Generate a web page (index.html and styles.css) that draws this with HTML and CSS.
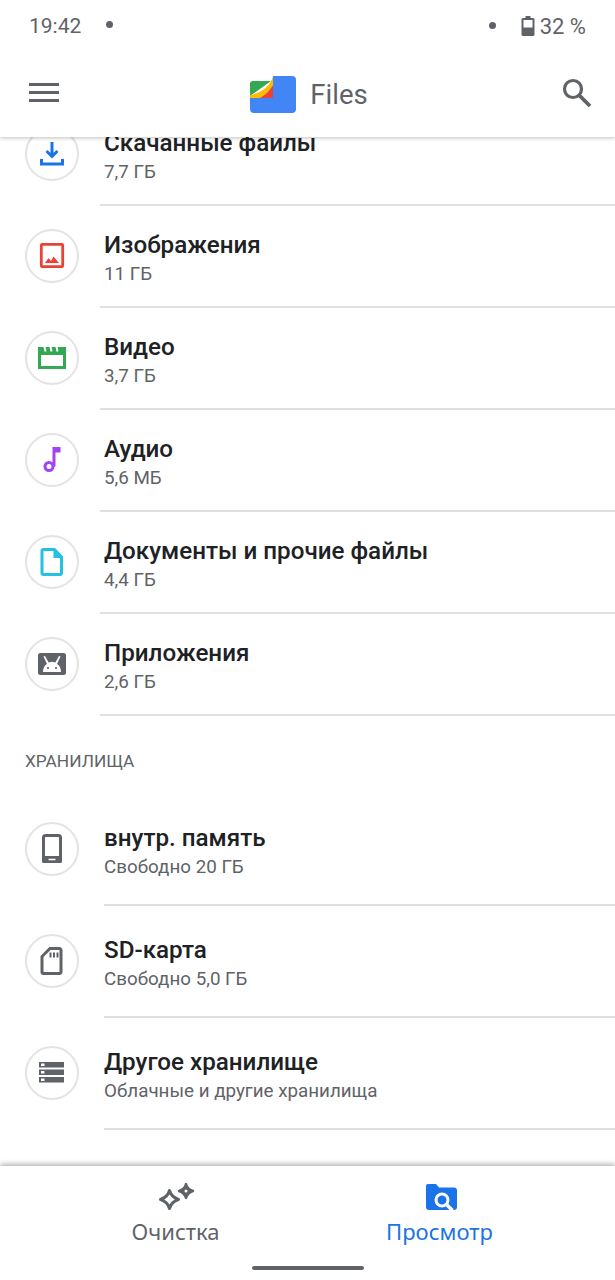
FILE: index.html
```html
<!DOCTYPE html>
<html lang="ru">
<head>
    <meta name="viewport" content="width=device-width, initial-scale=1" charset="utf-8">
    <title>Files</title>
    <link rel="stylesheet" href="styles.css">
</head>
<body>
<header class="top">
    <div class="status">
        <span class="status-time">19:42</span>
        <span class="dot dot-left"></span>
        <span class="status-space"></span>
        <span class="dot dot-right"></span>
        <svg class="battery" width="14" height="20" viewBox="0 0 14 20">
            <path d="M4.500 0h5v2h2.500a1.500 1.500 0 0 1 1.500 1.500v15a1.500 1.500 0 0 1-1.500 1.500h-10a1.500 1.500 0 0 1-1.500-1.500v-15a1.500 1.500 0 0 1 1.500-1.500h2.500z" fill="#5f6368"/>
            <rect x="2.500" y="4" width="9" height="7.500" fill="#fff"/>
        </svg>
        <span class="status-pct">32 %</span>
    </div>
    <div class="appbar">
        <svg class="menu-icon" width="30" height="20" viewBox="0 0 30 20">
            <path d="M0 1.500h30M0 9.500h30M0 17.500h30" stroke="#5f6368" stroke-width="3" fill="none"/>
        </svg>
        <div class="brand">
            <svg width="46" height="37" viewBox="0 0 46 37">
                <path d="M3 5h18L0 20V8a3 3 0 0 1 3-3z" fill="#34a853"/>
                <path d="M23 0C21 9 12 17 0 19v4h8C16 19 21 14 23 9z" fill="#fbbc04"/>
                <path d="M8 23C16 19 20 14 23 9v14z" fill="#ea4335"/>
                <path d="M23 0h19a4 4 0 0 1 4 4v29a4 4 0 0 1-4 4H4a4 4 0 0 1-4-4V22h23z" fill="#4285f4"/>
            </svg>
            <span class="brand-name">Files</span>
        </div>
        <svg class="search-icon" width="30" height="30" viewBox="0 0 30 30">
            <circle cx="11" cy="11" r="8.500" stroke="#5f6368" stroke-width="3.200" fill="none"/>
            <path d="M17.500 17.500L28 28" stroke="#5f6368" stroke-width="3.800" fill="none"/>
        </svg>
    </div>
</header>

<main class="content">
    <div class="list">
        <div class="row">
            <div class="row-icon"><div class="circle">
                <svg width="32" height="32" viewBox="0 0 32 32">
                    <path d="M16 4v14M10.500 13l5.500 5.500 5.500-5.500" stroke="#1a73e8" stroke-width="3" fill="none"/>
                    <path d="M5.500 21v5h21v-5" stroke="#1a73e8" stroke-width="3" fill="none"/>
                </svg>
            </div></div>
            <div class="row-text">
                <div class="title">Скачанные файлы</div>
                <div class="sub">7,7 ГБ</div>
            </div>
        </div>
        <div class="row">
            <div class="row-icon"><div class="circle">
                <svg width="32" height="32" viewBox="0 0 32 32">
                    <rect x="5.300" y="4.300" width="21.400" height="22.400" rx="1" stroke="#ea4335" stroke-width="2.800" fill="none"/>
                    <path d="M9 23l3.500-5 2.500 3 2.500-4.500 5.500 6.500z" fill="#ea4335"/>
                </svg>
            </div></div>
            <div class="row-text">
                <div class="title">Изображения</div>
                <div class="sub">11 ГБ</div>
            </div>
        </div>
        <div class="row">
            <div class="row-icon"><div class="circle">
                <svg width="32" height="32" viewBox="0 0 32 32">
                    <path d="M2 5h28v8H2z" fill="#34a853"/>
                    <path d="M8.500 4.500l1 5M14.500 4.500l1 5M20.500 4.500l1 5" stroke="#fff" stroke-width="2" fill="none"/>
                    <path d="M3.500 12v13.500h25V12" stroke="#34a853" stroke-width="3" fill="none"/>
                </svg>
            </div></div>
            <div class="row-text">
                <div class="title">Видео</div>
                <div class="sub">3,7 ГБ</div>
            </div>
        </div>
        <div class="row">
            <div class="row-icon"><div class="circle">
                <svg width="32" height="32" viewBox="0 0 32 32">
                    <circle cx="13" cy="22.500" r="4" stroke="#a142f4" stroke-width="3" fill="none"/>
                    <path d="M16.500 22.500V3h8v5.500h-5v14z" fill="#a142f4"/>
                </svg>
            </div></div>
            <div class="row-text">
                <div class="title">Аудио</div>
                <div class="sub">5,6 МБ</div>
            </div>
        </div>
        <div class="row">
            <div class="row-icon"><div class="circle">
                <svg width="32" height="32" viewBox="0 0 32 32">
                    <path d="M7.500 3.500h11l7 7.500v16a1.500 1.500 0 0 1-1.500 1.500H7.500A1.500 1.500 0 0 1 6 27V5a1.500 1.500 0 0 1 1.500-1.500z" stroke="#24c1e0" stroke-width="3" stroke-linejoin="round" fill="none"/>
                    <path d="M17.500 2l10 10h-10z" fill="#24c1e0"/>
                </svg>
            </div></div>
            <div class="row-text">
                <div class="title">Документы и прочие файлы</div>
                <div class="sub">4,4 ГБ</div>
            </div>
        </div>
        <div class="row">
            <div class="row-icon"><div class="circle">
                <svg width="32" height="32" viewBox="0 0 32 32">
                    <rect x="2" y="5" width="28" height="22" rx="2.500" fill="#5f6368"/>
                    <path d="M7 24c0-4 1.500-6.500 4-8L7.500 8.500 9 8l3.700 6.500a9 9 0 0 1 6.600 0L23 8l1.500.5L21 16c2.500 1.500 4 4 4 8z" fill="#fff"/>
                    <circle cx="12" cy="20" r="1.100" fill="#5f6368"/>
                    <circle cx="20" cy="20" r="1.100" fill="#5f6368"/>
                </svg>
            </div></div>
            <div class="row-text">
                <div class="title">Приложения</div>
                <div class="sub">2,6 ГБ</div>
            </div>
        </div>
    </div>

    <div class="section-label">ХРАНИЛИЩА</div>

    <div class="list list-storage">
        <div class="row">
            <div class="row-icon"><div class="circle">
                <svg width="32" height="32" viewBox="0 0 32 32">
                    <rect x="7.500" y="2.500" width="17" height="26" rx="2" stroke="#5f6368" stroke-width="3" fill="none"/>
                    <rect x="6" y="23" width="20" height="7" rx="1.500" fill="#5f6368"/>
                    <path d="M12.500 26.500h7" stroke="#fff" stroke-width="1.500"/>
                </svg>
            </div></div>
            <div class="row-text">
                <div class="title">внутр. память</div>
                <div class="sub">Свободно 20 ГБ</div>
            </div>
        </div>
        <div class="row">
            <div class="row-icon"><div class="circle">
                <svg width="32" height="32" viewBox="0 0 32 32">
                    <path d="M14 3.500h9.500a1.500 1.500 0 0 1 1.500 1.500v22a1.500 1.500 0 0 1-1.500 1.500h-16a1.500 1.500 0 0 1-1.500-1.500V11.500z" stroke="#5f6368" stroke-width="3" fill="none"/>
                    <path d="M14.500 7.500v5M18 7.500v5M21.500 7.500v5" stroke="#5f6368" stroke-width="2" fill="none"/>
                </svg>
            </div></div>
            <div class="row-text">
                <div class="title">SD-карта</div>
                <div class="sub">Свободно 5,0 ГБ</div>
            </div>
        </div>
        <div class="row">
            <div class="row-icon"><div class="circle">
                <svg width="32" height="32" viewBox="0 0 32 32">
                    <path d="M3 5h25v5.500H3zM3 12.500h25V18H3zM3 20h25v5.500H3z" fill="#5f6368"/>
                    <path d="M5 6.500h3.500v2.500H5zM5 14h3.500v2.500H5zM5 21.500h3.500V24H5z" fill="#fff"/>
                </svg>
            </div></div>
            <div class="row-text">
                <div class="title">Другое хранилище</div>
                <div class="sub">Облачные и другие хранилища</div>
            </div>
        </div>
    </div>
</main>

<nav class="bottom">
    <div class="tabs">
        <div class="tab">
            <svg width="40" height="32" viewBox="0 0 40 32">
                <path d="M13.500 8.500c1.200 4.500 3.800 7.200 9 9-5.200 1.800-7.800 4.500-9 9-1.200-4.500-3.800-7.200-9-9 5.200-1.800 7.800-4.500 9-9z" stroke="#5f6368" stroke-width="3" stroke-linejoin="round" fill="none"/>
                <path d="M30 2c.8 3.500 2.800 5.500 7 7-4.200 1.500-6.200 3.500-7 7-.8-3.500-2.800-5.500-7-7 4.200-1.500 6.200-3.500 7-7z" stroke="#5f6368" stroke-width="2.400" stroke-linejoin="round" fill="#5f6368"/>
                <circle cx="30" cy="9" r="1.500" fill="#fff"/>
            </svg>
            <span class="tab-label">Очистка</span>
        </div>
        <div class="tab tab-active">
            <svg width="40" height="32" viewBox="0 0 40 32">
                <path d="M8 2h8l3 3.500h15a3 3 0 0 1 3 3V25a3 3 0 0 1-3 3H9a3 3 0 0 1-3-3V4a2 2 0 0 1 2-2z" fill="#1a73e8"/>
                <circle cx="22" cy="18" r="6" stroke="#fff" stroke-width="3" fill="none"/>
                <path d="M26.500 22.500l6 6" stroke="#fff" stroke-width="3.500"/>
            </svg>
            <span class="tab-label">Просмотр</span>
        </div>
    </div>
    <div class="home-bar"></div>
</nav>
</body>
</html>
```

FILE: styles.css
```css
html, body {
    margin: 0;
    padding: 0;
}

body {
    width: 615px;
    height: 1280px;
    display: flex;
    flex-direction: column;
    overflow: hidden;
    background-color: white;
    font-family: Roboto, "Noto Sans", sans-serif;
}

.top {
    height: 137px;
    flex-shrink: 0;
    background-color: white;
    box-shadow: 0 1px 4px rgba(0, 0, 0, 0.25);
    z-index: 2;
}

.status {
    height: 52px;
    padding: 0 29px;
    display: flex;
    align-items: center;
    color: #5f6368;
    font-size: 21px;
}

.status-space {
    flex: 1;
}

.status-pct {
    margin-left: 5px;
    font-size: 22px;
}

.dot {
    width: 7px;
    height: 7px;
    border-radius: 50%;
    background-color: #5f6368;
}

.dot-left {
    margin-left: 25px;
    margin-bottom: 4px;
}

.dot-right {
    margin-right: 25px;
    margin-bottom: 2px;
}

.appbar {
    height: 85px;
    padding: 0 23px 0 29px;
    display: flex;
    align-items: center;
    justify-content: space-between;
}

.menu-icon {
    margin-bottom: 3px;
}

.search-icon {
    margin-bottom: 3px;
}

.brand {
    display: flex;
    align-items: center;
    gap: 14px;
    margin-left: -3px;
}

.brand-name {
    color: #5f6368;
    font-size: 27.500px;
}

.content {
    flex: 1;
    overflow: hidden;
}

.list {
    margin-top: -33px;
}

.row {
    height: 102px;
    display: flex;
}

.row-icon {
    width: 100px;
    padding: 0 0 2px 25px;
    box-sizing: border-box;
    display: flex;
    align-items: center;
    flex-shrink: 0;
}

.circle {
    width: 54px;
    height: 54px;
    box-sizing: border-box;
    border: 2px solid #e3e3e3;
    border-radius: 50%;
    display: flex;
    align-items: center;
    justify-content: center;
}

.circle svg {
    flex-shrink: 0;
}

.row-text {
    flex: 1;
    padding: 6px 0 0 4px;
    box-sizing: border-box;
    border-bottom: 2px solid #e0e0e0;
    display: flex;
    flex-direction: column;
    justify-content: center;
}

.title {
    color: #202124;
    font-size: 24.200px;
    font-weight: 500;
    line-height: 28px;
}

.sub {
    margin-top: 2px;
    color: #5f6368;
    font-size: 18.800px;
    line-height: 26px;
}

.section-label {
    height: 78px;
    padding: 34px 0 0 25px;
    box-sizing: border-box;
    color: #5f6368;
    font-size: 17.300px;
    line-height: 22px;
}

.list-storage {
    margin-top: 0;
}

.list-storage .row {
    height: 112px;
}

.list-storage .row-icon {
    width: 104px;
}

.list-storage .row-text {
    padding-left: 0;
}

.bottom {
    height: 114px;
    flex-shrink: 0;
    background-color: white;
    box-shadow: 0 -2px 5px rgba(0, 0, 0, 0.3);
    z-index: 2;
    display: flex;
    flex-direction: column;
    align-items: center;
}

.tabs {
    width: 528px;
    display: grid;
    grid-template-columns: 1fr 1fr;
    padding-top: 16px;
}

.tab {
    display: flex;
    flex-direction: column;
    align-items: center;
    color: #5f6368;
}

.tab-active {
    color: #1a73e8;
}

.tab-label {
    font-family: "Noto Sans", Roboto, sans-serif;
    font-size: 22px;
    line-height: 30px;
    margin-top: 2px;
}

.home-bar {
    width: 112px;
    height: 4px;
    margin-top: 20px;
    border-radius: 2px;
    background-color: #5f6368;
}
```
